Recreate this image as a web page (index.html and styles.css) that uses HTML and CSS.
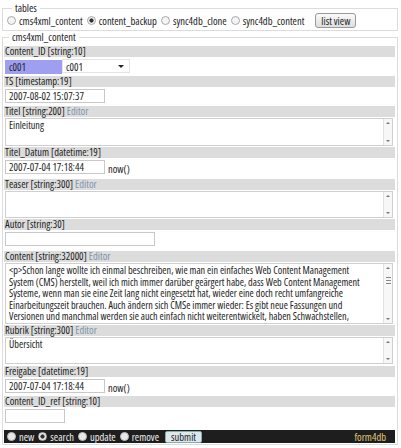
FILE: index.html
```html
<!DOCTYPE html>
<html lang="de">
<head>
    <meta charset="UTF-8">
    <meta name="viewport" content="width=device-width, initial-scale=1.0">
    <title>form4db</title>
    <link rel="stylesheet" href="styles.css">
</head>
<body>
    <form class="form4db">
        <fieldset class="tables">
            <legend>tables</legend>
            <label class="choice"><input type="radio" name="table"> cms4xml_content</label>
            <label class="choice"><input type="radio" name="table" checked> content_backup</label>
            <label class="choice"><input type="radio" name="table"> sync4db_clone</label>
            <label class="choice"><input type="radio" name="table"> sync4db_content</label>
            <button type="button" class="list-view">list view</button>
        </fieldset>

        <fieldset class="record">
            <legend>cms4xml_content</legend>

            <div class="field field-input">
                <div class="field-title">Content_ID [string:10]</div>
                <div class="field-row">
                    <input class="text selected w-57" value="c001">
                    <span class="select-box">
                        <select class="id-select"><option>c001</option></select>
                    </span>
                </div>
            </div>

            <div class="field field-input">
                <div class="field-title">TS [timestamp:19]</div>
                <div class="field-row">
                    <input class="text w-100" value="2007-08-02 15:07:37">
                </div>
            </div>

            <div class="field field-area">
                <div class="field-title">Titel [string:200] <a class="editor">Editor</a></div>
                <div class="area h-26">
                    <textarea wrap="off">Einleitung</textarea>
                    <div class="scroll"><span class="arrow up"></span><span class="arrow down"></span></div>
                </div>
            </div>

            <div class="field field-input tall">
                <div class="field-title">Titel_Datum [datetime:19]</div>
                <div class="field-row">
                    <input class="text w-100" value="2007-07-04 17:18:44">
                    <span class="now">now()</span>
                </div>
            </div>

            <div class="field field-area short">
                <div class="field-title">Teaser [string:300] <a class="editor">Editor</a></div>
                <div class="area h-25">
                    <textarea wrap="off"></textarea>
                    <div class="scroll"><span class="arrow up"></span><span class="arrow down"></span></div>
                </div>
            </div>

            <div class="field field-input tall">
                <div class="field-title">Autor [string:30]</div>
                <div class="field-row">
                    <input class="text w-150" value="">
                </div>
            </div>

            <div class="field field-area big">
                <div class="field-title">Content [string:32000] <a class="editor">Editor</a></div>
                <div class="area h-59">
                    <textarea wrap="off">&lt;p&gt;Schon lange wollte ich einmal beschreiben, wie man ein einfaches Web Content Management
System (CMS) herstellt, weil ich mich immer darüber geärgert habe, dass Web Content Management
Systeme, wenn man sie eine Zeit lang nicht eingesetzt hat, wieder eine doch recht umfangreiche
Einarbeitungszeit brauchen. Auch ändern sich CMSe immer wieder: Es gibt neue Fassungen und
Versionen und manchmal werden sie auch einfach nicht weiterentwickelt, haben Schwachstellen,
oder sind nicht mehr zu gebrauchen.&lt;/p&gt;</textarea>
                    <div class="scroll"><span class="arrow up"></span><span class="thumb"></span><span class="arrow down"></span></div>
                </div>
            </div>

            <div class="field field-area">
                <div class="field-title">Rubrik [string:300] <a class="editor">Editor</a></div>
                <div class="area h-25">
                    <textarea wrap="off">Übersicht</textarea>
                    <div class="scroll"><span class="arrow up"></span><span class="arrow down"></span></div>
                </div>
            </div>

            <div class="field field-input">
                <div class="field-title">Freigabe [datetime:19]</div>
                <div class="field-row">
                    <input class="text w-100" value="2007-07-04 17:18:44">
                    <span class="now">now()</span>
                </div>
            </div>

            <div class="field field-input last">
                <div class="field-title">Content_ID_ref [string:10]</div>
                <div class="field-row">
                    <input class="text w-60" value="">
                </div>
            </div>

            <div class="actions">
                <label class="action"><input type="radio" name="action"> new</label>
                <label class="action"><input type="radio" name="action" checked> search</label>
                <label class="action"><input type="radio" name="action"> update</label>
                <label class="action"><input type="radio" name="action"> remove</label>
                <button type="button" class="submit">submit</button>
                <span class="brand">form4db</span>
            </div>
        </fieldset>
    </form>
</body>
</html>
```

FILE: styles.css
```css
html,
body {
    margin: 0;
    padding: 0;
    background: white;
}

body {
    font-family: "Open Sans", "DejaVu Sans Condensed", sans-serif;
    font-stretch: 75%;
    font-size: 10.5px;
    color: #222;
}

.form4db {
    width: 401px;
    padding: 3px 3px 0 2px;
    box-sizing: border-box;
}

fieldset {
    margin: 0;
    border: 1px solid #dcdcdc;
}

legend {
    padding: 0 3px;
    margin-left: 5px;
    line-height: 12px;
}

/* table chooser */

.tables {
    display: flex;
    align-items: center;
    padding: 0 4px 2px 4px;
}

.tables legend {
    line-height: 10px;
}

.choice {
    display: flex;
    align-items: center;
    margin-right: 4px;
    white-space: nowrap;
}

input[type=radio] {
    appearance: none;
    width: 9px;
    height: 9px;
    margin: 0 3px 0 0;
    border: 1px solid #a8a8a8;
    border-radius: 50%;
    background: #f4f4f4;
    box-sizing: border-box;
}

input[type=radio]:checked {
    background: radial-gradient(circle, #333 0 1.8px, #f4f4f4 2.4px);
}

.list-view {
    margin-left: 7px;
    height: 15px;
    padding: 0 5px;
    font: inherit;
    white-space: nowrap;
    color: #222;
    border: 1px solid #999;
    border-radius: 3px;
    background: linear-gradient(#fafafa, #dedede);
}

/* record */

.record {
    padding: 3px 2px 1px 1px;
}

.field-title {
    height: 11px;
    line-height: 11px;
    padding-left: 1px;
    background: #dcdcdc;
    white-space: nowrap;
}

.editor {
    color: #8094aa;
}

.field-input {
    height: 30px;
}

.field-input.tall {
    height: 32px;
}

.field-area {
    height: 41px;
}

.field-area.short {
    height: 40px;
}

.field-area.big {
    height: 74px;
}

.field-row {
    display: flex;
    align-items: flex-end;
    margin-top: 2px;
}

.text {
    height: 14px;
    padding: 0 3px;
    margin: 0 0 0 1px;
    border: 1px solid #c8c8c8;
    box-sizing: border-box;
    font: inherit;
    color: #222;
    outline: none;
}

.selected {
    background: #9f9ff2;
    border-color: #9f9ff2;
}

.w-57 { width: 57px; }
.w-60 { width: 60px; }
.w-100 { width: 100px; }
.w-150 { width: 150px; }

.select-box {
    position: relative;
    display: inline-block;
}

.id-select {
    appearance: none;
    width: 68px;
    height: 14px;
    padding: 0 3px;
    border: 1px solid #e4e4e4;
    background: white;
    font: inherit;
    color: #222;
}

.select-box::after {
    content: "";
    position: absolute;
    right: 6px;
    top: 6px;
    border: 3px solid transparent;
    border-top: 3px solid #222;
    border-bottom: 0;
}

.now {
    margin-left: 3px;
    line-height: 10px;
}

/* textareas with a slim scrollbar */

.area {
    display: flex;
    margin: 1px 2px 0 1px;
    border: 1px solid #cfcfcf;
}

.h-25 { height: 25px; }
.h-26 { height: 26px; }
.h-59 { height: 59px; }

.area textarea {
    flex: 1;
    border: 0;
    padding: 1px 3px;
    margin: 0;
    resize: none;
    overflow: hidden;
    font: inherit;
    font-size: 10.2px;
    line-height: 11.5px;
    color: #222;
    outline: none;
}

.scroll {
    width: 8px;
    border-left: 1px solid #e2e2e2;
    background: #f7f7f7;
    display: flex;
    flex-direction: column;
    justify-content: space-between;
    align-items: center;
}

.arrow {
    width: 0;
    height: 0;
    margin: 3px 0;
    border: 2px solid transparent;
}

.arrow.up {
    border-top: 0;
    border-bottom: 2px solid #777;
}

.arrow.down {
    border-bottom: 0;
    border-top: 2px solid #777;
}

.thumb {
    width: 5px;
    height: 5px;
    border-top: 1px solid #888;
    border-bottom: 1px solid #888;
    background: linear-gradient(#f7f7f7 40%, #888 40% 60%, #f7f7f7 60%);
    margin-bottom: 26px;
}

.last {
    height: 34px;
}

/* bottom action bar */

.actions {
    display: flex;
    align-items: center;
    height: 13px;
    padding-left: 3px;
    background: #1e1e1e;
    color: #eee;
}

.action {
    display: flex;
    align-items: center;
    margin-right: 4px;
}

.actions input[type=radio] {
    border-color: #bbb;
    background: #e8e8e8;
}

.actions input[type=radio]:checked {
    background: radial-gradient(circle, #333 0 1.8px, #e8e8e8 2.4px);
}

.submit {
    height: 12px;
    padding: 0 5px;
    margin-left: 2px;
    font: inherit;
    line-height: 10px;
    color: #222;
    border: 1px solid #8aa;
    border-radius: 2px;
    background: #dde8ee;
}

.brand {
    margin-left: auto;
    margin-right: 9px;
    color: #e0c878;
}
```
